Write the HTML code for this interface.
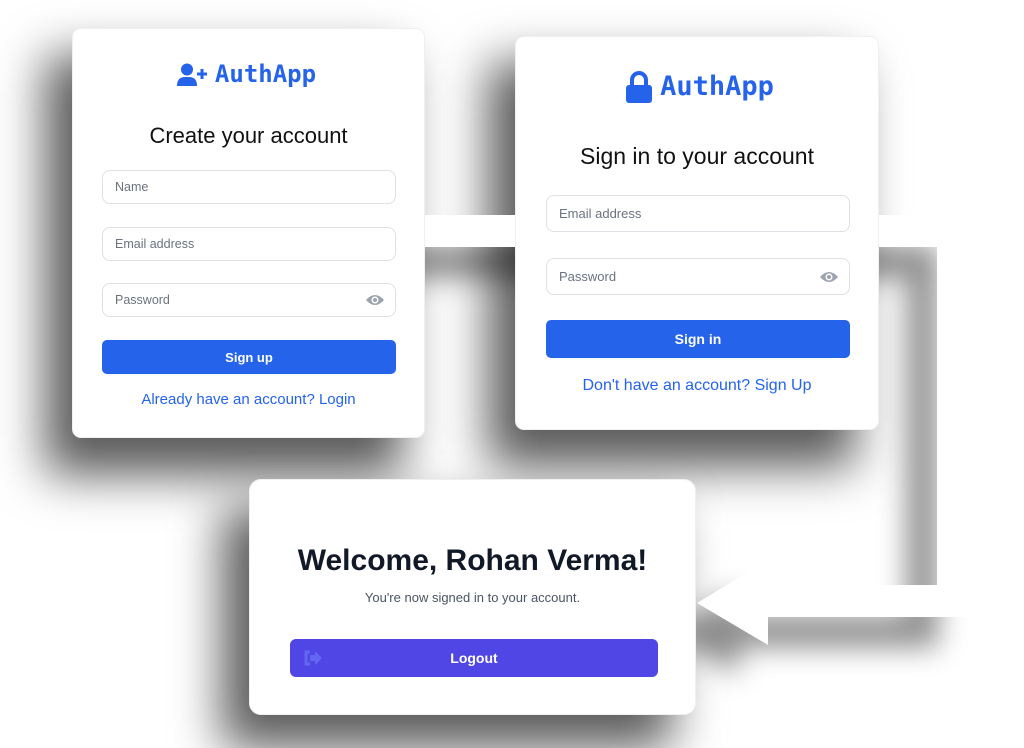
<!DOCTYPE html>
<html><head><meta charset="utf-8"><style>
*{box-sizing:border-box;margin:0;padding:0}
body{width:1024px;height:732px;background:#fff;position:relative;overflow:hidden;font-family:"Liberation Sans",sans-serif}
.sh{position:absolute;background:#5a5a5a;filter:blur(24px);z-index:1;border-radius:10px}
.card{position:absolute;background:#fff;border-radius:9px;z-index:3;border:1px solid #eef0f3}
.logo{position:absolute;left:0;right:0;text-align:center;color:#2563eb;font-family:"DejaVu Sans Mono",monospace;font-weight:bold}
.h{position:absolute;left:0;right:0;text-align:center;color:#111;}
.in{position:absolute;border:1.5px solid #dde0e5;border-radius:8px;color:#6b7280;font-size:12.5px;padding-left:12px;display:flex;align-items:center}
.btn{position:absolute;background:#2563eb;color:#fff;font-weight:bold;border-radius:5px;display:flex;align-items:center;justify-content:center}
.lnk{position:absolute;left:0;right:0;text-align:center;color:#2563eb;}
.eye{position:absolute;right:10px;top:50%;transform:translateY(-50%)}
</style></head><body>
<div class="sh" style="left:45px;top:55px;width:358px;height:420px"></div>
<div class="sh" style="left:488px;top:62px;width:368px;height:405px"></div>
<div class="sh" style="left:222px;top:508px;width:450px;height:240px"></div>
<svg style="position:absolute;left:0;top:0;z-index:2;filter:drop-shadow(-30px 30px 14px rgba(0,0,0,.45))" width="1024" height="732">
<polygon fill="#fff" points="400,215 968,215 968,617 768,617 768,645 697,603 768,560 768,585 937,585 937,247 400,247"/>
</svg>

<div class="card" style="left:72px;top:28px;width:353px;height:410px">
 <div class="logo" style="top:31px;font-size:24px;padding-left:34px">AuthApp
 <svg style="position:absolute;left:104px;top:3px" width="31" height="24" viewBox="0 0 31 24"><circle cx="10" cy="6.5" r="6" fill="#2563eb"/><path d="M0 23 Q0 14 8 14 H12 Q20 14 20 23Z" fill="#2563eb"/><path d="M25 6v10M20 11h10" stroke="#2563eb" stroke-width="3"/></svg></div>
 <div class="h" style="top:94px;font-size:22px">Create your account</div>
 <div class="in" style="left:29px;top:141px;width:294px;height:34px">Name</div>
 <div class="in" style="left:29px;top:198px;width:294px;height:34px">Email address</div>
 <div class="in" style="left:29px;top:254px;width:294px;height:34px">Password
  <svg class="eye" width="20" height="14" viewBox="0 0 20 14"><path d="M1 7Q10 -3 19 7Q10 17 1 7Z" fill="#9ca3af"/><circle cx="10" cy="7" r="3.5" fill="#fff"/><circle cx="10" cy="7" r="2" fill="#9ca3af"/></svg></div>
 <div class="btn" style="left:29px;top:311px;width:294px;height:34px;font-size:13px">Sign up</div>
 <div class="lnk" style="top:362px;font-size:15px">Already have an account? Login</div>
</div>

<div class="card" style="left:515px;top:36px;width:364px;height:394px">
 <div class="logo" style="top:34px;font-size:27px;padding-left:40px">AuthApp
 <svg style="position:absolute;left:109px;top:0" width="28" height="33" viewBox="0 0 28 33"><path d="M7 15V9a7 7 0 0 1 14 0v6" stroke="#2563eb" stroke-width="4" fill="none"/><rect x="1" y="14" width="26" height="18" rx="3" fill="#2563eb"/></svg></div>
 <div class="h" style="top:106px;font-size:23px">Sign in to your account</div>
 <div class="in" style="left:30px;top:158px;width:304px;height:37px;font-size:13px">Email address</div>
 <div class="in" style="left:30px;top:221px;width:304px;height:37px;font-size:13px">Password
  <svg class="eye" width="20" height="14" viewBox="0 0 20 14"><path d="M1 7Q10 -3 19 7Q10 17 1 7Z" fill="#9ca3af"/><circle cx="10" cy="7" r="3.5" fill="#fff"/><circle cx="10" cy="7" r="2" fill="#9ca3af"/></svg></div>
 <div class="btn" style="left:30px;top:283px;width:304px;height:38px;font-size:14px">Sign in</div>
 <div class="lnk" style="top:340px;font-size:16px">Don't have an account? Sign Up</div>
</div>

<div class="card" style="left:249px;top:479px;width:447px;height:236px;border-radius:12px">
 <div class="h" style="top:64px;font-size:30px;font-weight:900;color:#111827">Welcome, Rohan Verma!</div>
 <div class="h" style="top:110px;font-size:13px;color:#4b5563">You're now signed in to your account.</div>
 <div class="btn" style="left:40px;top:159px;width:368px;height:38px;background:#4f46e5;font-size:14px;border-radius:6px">Logout
  <svg style="position:absolute;left:13px;top:11px" width="20" height="16" viewBox="0 0 20 16"><path d="M7 2H3v12h4" stroke="#6366f1" stroke-width="3" fill="none"/><path d="M7 5h5V1l7 7-7 7v-4H7z" fill="#6366f1"/></svg></div>
</div>
</body></html>
